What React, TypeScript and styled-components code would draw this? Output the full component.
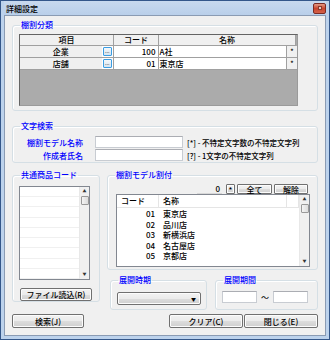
import React from "react";
import styled, { createGlobalStyle } from "styled-components";

const GlobalStyle = createGlobalStyle`
  html, body {
    margin: 0;
    padding: 0;
    background: #ffffff;
  }
  body {
    font-family: "Noto Sans CJK JP", "Liberation Sans", sans-serif;
    font-size: 8px;
    font-weight: 500;
    color: #000;
  }
  * { box-sizing: border-box; }
`;

const ownerRows = [
  { label: "企業", code: "100", name: "A社" },
  { label: "店舗", code: "01", name: "東京店" },
];

const stores = [
  { code: "01", name: "東京店" },
  { code: "02", name: "品川店" },
  { code: "03", name: "新横浜店" },
  { code: "04", name: "名古屋店" },
  { code: "05", name: "京都店" },
];

const App = () => {
  return (
    <>
      <GlobalStyle />
      <Window>
        <TitleBar>
          <TitleText>詳細設定</TitleText>
          <CloseBtn>
            <CloseMark />
          </CloseBtn>
        </TitleBar>
        <Client>
          {/* 棚割分類 */}
          <Group h={91}>
            <Legend>棚割分類</Legend>
            <Grid>
              <GridHeader>
                <HeadCell w={94}>項目</HeadCell>
                <HeadCell w={45}>コード</HeadCell>
                <HeadCell w={137}>名称</HeadCell>
              </GridHeader>
              {ownerRows.map((r) => (
                <GridRow key={r.label}>
                  <LabelCell>{r.label}</LabelCell>
                  <PickCell>
                    <PickBtn>...</PickBtn>
                  </PickCell>
                  <CodeCell>{r.code}</CodeCell>
                  <NameCell>{r.name}</NameCell>
                  <StarCell>*</StarCell>
                </GridRow>
              ))}
            </Grid>
          </Group>

          {/* 文字検索 */}
          <Group h={42} mt={3}>
            <Legend>文字検索</Legend>
            <SearchBody>
              <SearchRow>
                <SearchLabel>棚割モデル名称</SearchLabel>
                <TextBox w={88} />
                <Hint>[*] - 不特定文字数の不特定文字列</Hint>
              </SearchRow>
              <SearchRow>
                <SearchLabel>作成者氏名</SearchLabel>
                <TextBox w={88} />
                <Hint>[?] - 1文字の不特定文字列</Hint>
              </SearchRow>
            </SearchBody>
          </Group>

          <Lower>
            {/* 共通商品コード */}
            <Group h={132} w={88}>
              <Legend>共通商品コード</Legend>
              <ListBox>
                <ListLines>
                  {Array.from({ length: 9 }).map((_, i) => (
                    <ListLine key={i} />
                  ))}
                </ListLines>
                <VScroll>
                  <Arrow>▲</Arrow>
                  <Thumb />
                  <Spacer />
                  <Arrow>▼</Arrow>
                </VScroll>
              </ListBox>
              <FileBtn>ファイル読込(R)</FileBtn>
            </Group>

            <RightCol>
              {/* 棚割モデル割付 */}
              <Group h={100}>
                <Legend>棚割モデル割付</Legend>
                <ToolRow>
                  <CountBox>0</CountBox>
                  <SmallBtn w={9}>*</SmallBtn>
                  <SmallBtn w={35}>全て</SmallBtn>
                  <SmallBtn w={34}>解除</SmallBtn>
                </ToolRow>
                <StoreList>
                  <StoreMain>
                    <StoreHead>
                      <StoreHeadCell w={42}>コード</StoreHeadCell>
                      <StoreHeadCell w={128}>名称</StoreHeadCell>
                      <StoreHeadCell w={12} />
                    </StoreHead>
                    {stores.map((s) => (
                      <StoreRow key={s.code}>
                        <StoreCode>{s.code}</StoreCode>
                        <StoreName>{s.name}</StoreName>
                      </StoreRow>
                    ))}
                  </StoreMain>
                  <VScroll>
                    <Arrow>▲</Arrow>
                    <Thumb />
                    <Spacer />
                    <Arrow>▼</Arrow>
                  </VScroll>
                </StoreList>
              </Group>

              <PeriodRow>
                <Group h={35} w={97}>
                  <Legend>展開時期</Legend>
                  <Combo>
                    <ComboArrow>▼</ComboArrow>
                  </Combo>
                </Group>
                <Group h={35} w={103}>
                  <Legend>展開期間</Legend>
                  <RangeRow>
                    <TextBox w={35} />
                    <Tilde>〜</Tilde>
                    <TextBox w={35} />
                  </RangeRow>
                </Group>
              </PeriodRow>
            </RightCol>
          </Lower>

          <Footer>
            <PushBtn w={72}>検索(J)</PushBtn>
            <FooterRight>
              <PushBtn w={74}>クリア(C)</PushBtn>
              <PushBtn w={74}>閉じる(E)</PushBtn>
            </FooterRight>
          </Footer>
        </Client>
      </Window>
    </>
  );
};

export default App;

const Window = styled.div`
  width: 330px;
  height: 340px;
  border: 1px solid #34578a;
  background: #bcd2ec;
  padding: 0 3px 3px 3px;
  display: flex;
  flex-direction: column;
`;

const TitleBar = styled.div`
  height: 14px;
  display: flex;
  align-items: center;
  justify-content: space-between;
  background: linear-gradient(#c8d9ee, #b9cfea);
`;

const TitleText = styled.span`
  font-size: 8px;
  padding-left: 2px;
  color: #000;
`;

const CloseBtn = styled.div`
  width: 13px;
  height: 11px;
  border: 1px solid #7a2a24;
  border-radius: 2px;
  background: linear-gradient(#e49a85, #c9452e 50%, #d3624a);
  display: flex;
  align-items: center;
  justify-content: center;
`;

const CloseMark = styled.div`
  width: 4px;
  height: 4px;
  background: #e8c9c0;
  border: 1px solid #8a3a2e;
`;

const Client = styled.div`
  flex: 1;
  background: #f0f0f0;
  border: 1px solid #8a9bb3;
  padding: 4px 7px 0 7px;
  display: flex;
  flex-direction: column;
  gap: 7px;
`;

const Group = styled.fieldset<{ h: number; w?: number; mt?: number }>`
  margin: ${(p) => p.mt ?? 0}px 0 0 0;
  padding: 4px 6px 0 6px;
  height: ${(p) => p.h}px;
  width: ${(p) => (p.w ? `${p.w}px` : "auto")};
  border: 1px solid #d5dfe5;
  border-radius: 3px;
  box-shadow: inset 1px 1px 0 #ffffff;
  min-width: 0;
`;

const Legend = styled.legend`
  padding: 0 1px;
  margin-left: 1px;
  font-size: 8px;
  line-height: 10px;
  color: #0000ff;
`;

const Grid = styled.div`
  width: 279px;
  height: 72px;
  background: #ababab;
  border: 1px solid #646464;
  border-right-color: #9a9a9a;
  border-bottom-color: #9a9a9a;
`;

const GridHeader = styled.div`
  display: flex;
  height: 11px;
`;

const HeadCell = styled.div<{ w: number }>`
  width: ${(p) => p.w}px;
  background: #f0f0f0;
  border-right: 1px solid #a0a0a0;
  border-bottom: 1px solid #a0a0a0;
  text-align: center;
  line-height: 10px;
`;

const GridRow = styled.div`
  display: flex;
  height: 12px;
  border-bottom: 1px solid #a0a0a0;
`;

const LabelCell = styled.div`
  width: 82px;
  background: #f0f0f0;
  text-align: center;
  line-height: 11px;
`;

const PickCell = styled.div`
  width: 12px;
  background: #ffffff;
  border-right: 1px solid #a0a0a0;
  display: flex;
  align-items: center;
  justify-content: center;
`;

const PickBtn = styled.div`
  width: 9px;
  height: 9px;
  border: 1px solid #3b9de3;
  border-radius: 1px;
  background: linear-gradient(#f4f8fb, #d6e4ef);
  font-size: 5px;
  line-height: 6px;
  text-align: center;
  color: #333;
`;

const CodeCell = styled.div`
  width: 45px;
  background: #ffffff;
  border-right: 1px solid #a0a0a0;
  text-align: right;
  padding-right: 2px;
  line-height: 11px;
`;

const NameCell = styled.div`
  width: 128px;
  background: #ffffff;
  padding-left: 1px;
  line-height: 11px;
`;

const StarCell = styled.div`
  width: 11px;
  background: #f0f0f0;
  border-left: 1px solid #a0a0a0;
  text-align: center;
  font-size: 7px;
  line-height: 11px;
`;

const SearchBody = styled.div`
  display: flex;
  flex-direction: column;
  gap: 1px;
  padding-top: 1px;
`;

const SearchRow = styled.div`
  display: flex;
  align-items: center;
  height: 12px;
`;

const SearchLabel = styled.div`
  width: 64px;
  text-align: right;
  color: #0000ff;
  margin-right: 12px;
`;

const TextBox = styled.div<{ w: number }>`
  width: ${(p) => p.w}px;
  height: 12px;
  background: #ffffff;
  border: 1px solid #c8ccd2;
  border-top-color: #abadb3;
`;

const Hint = styled.div`
  margin-left: 4px;
  font-size: 7.5px;
  white-space: nowrap;
`;

const Lower = styled.div`
  display: flex;
  gap: 7px;
`;

const ListBox = styled.div`
  margin-top: 2px;
  width: 71px;
  height: 94px;
  border: 1px solid #828790;
  background: #ffffff;
  display: flex;
`;

const ListLines = styled.div`
  flex: 1;
  display: flex;
  flex-direction: column;
`;

const ListLine = styled.div`
  height: 10.3px;
  border-bottom: 1px solid #f0f0f0;
`;

const VScroll = styled.div`
  width: 10px;
  background: #f0f0f0;
  border-left: 1px solid #e8e8e8;
  display: flex;
  flex-direction: column;
  align-items: center;
`;

const Arrow = styled.div`
  font-size: 4px;
  line-height: 9px;
  height: 9px;
  color: #333;
`;

const Thumb = styled.div`
  width: 8px;
  height: 9px;
  border: 1px solid #999;
  border-radius: 1px;
  background: linear-gradient(90deg, #f4f4f4, #dcdcdc);
`;

const Spacer = styled.div`
  flex: 1;
`;

const buttonBase = `
  border: 1px solid #707070;
  border-radius: 2px;
  background: linear-gradient(#f2f2f2, #ebebeb 50%, #dddddd 51%, #cfcfcf);
  box-shadow: inset 0 0 0 1px #fcfcfc;
  display: flex;
  align-items: center;
  justify-content: center;
  font-size: 8px;
  color: #000;
`;

const FileBtn = styled.div`
  ${buttonBase}
  margin-top: 8px;
  margin-left: 1px;
  width: 72px;
  height: 13px;
`;

const RightCol = styled.div`
  flex: 1;
  display: flex;
  flex-direction: column;
  gap: 5px;
`;

const ToolRow = styled.div`
  display: flex;
  justify-content: flex-end;
  gap: 2px;
  height: 10px;
  margin-right: 3px;
`;

const CountBox = styled.div`
  width: 25px;
  background: #f0f0f0;
  border-bottom: 1px solid #d8d8d8;
  text-align: right;
  padding-right: 2px;
  line-height: 10px;
  margin-right: 2px;
`;

const SmallBtn = styled.div<{ w: number }>`
  ${buttonBase}
  width: ${(p) => p.w}px;
  height: 10px;
  border-radius: 1px;
`;

const StoreList = styled.div`
  margin-left: 2px;
  width: 194px;
  height: 73px;
  border: 1px solid #828790;
  background: #ffffff;
  display: flex;
`;

const StoreMain = styled.div`
  flex: 1;
  display: flex;
  flex-direction: column;
`;

const StoreHead = styled.div`
  display: flex;
  height: 13px;
  border-bottom: 1px solid #e5e5e5;
  margin-bottom: 1px;
`;

const StoreHeadCell = styled.div<{ w: number }>`
  width: ${(p) => p.w}px;
  border-right: 1px solid #e5e5e5;
  padding-left: 4px;
  line-height: 12px;
`;

const StoreRow = styled.div`
  display: flex;
  height: 10.5px;
  line-height: 10.5px;
`;

const StoreCode = styled.div`
  width: 38px;
  text-align: right;
`;

const StoreName = styled.div`
  padding-left: 8px;
`;

const PeriodRow = styled.div`
  display: flex;
  gap: 8px;
  padding-left: 3px;
`;

const Combo = styled.div`
  ${buttonBase}
  margin-top: 3px;
  width: 84px;
  height: 13px;
  justify-content: flex-end;
  padding-right: 4px;
`;

const ComboArrow = styled.span`
  font-size: 5px;
`;

const RangeRow = styled.div`
  display: flex;
  align-items: center;
  gap: 4px;
  margin-top: 2px;
`;

const Tilde = styled.span`
  font-size: 8px;
`;

const Footer = styled.div`
  display: flex;
  justify-content: space-between;
  margin-top: -3px;
`;

const FooterRight = styled.div`
  display: flex;
  gap: 1px;
`;

const PushBtn = styled.div<{ w: number }>`
  ${buttonBase}
  width: ${(p) => p.w}px;
  height: 14px;
`;
